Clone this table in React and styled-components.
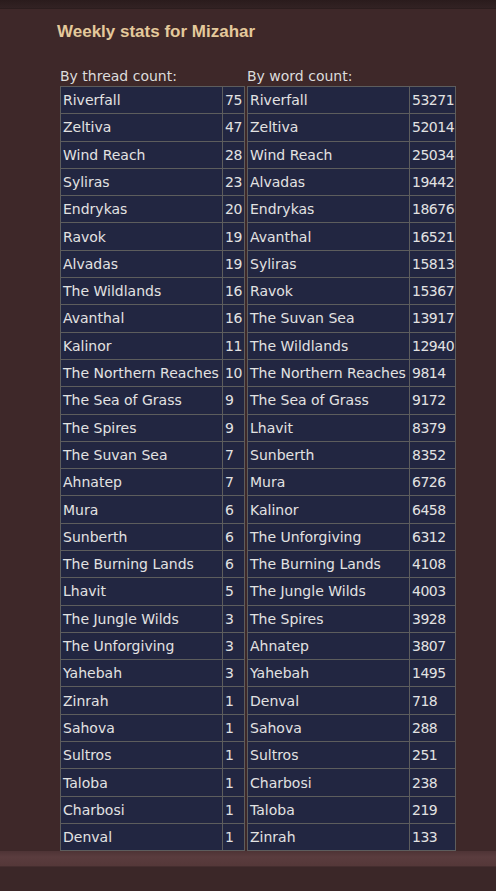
import React from 'react';
import styled, { createGlobalStyle } from 'styled-components';

const GlobalStyle = createGlobalStyle`
  html, body {
    margin: 0;
    padding: 0;
    background: #3e2829;
  }
`;

const Page = styled.div`
  width: 496px;
  height: 891px;
  display: flex;
  flex-direction: column;
  background: #3e2829;
  font-family: "DejaVu Sans", Verdana, sans-serif;
  overflow: hidden;
`;

const TopBar = styled.div`
  height: 8px;
  background: linear-gradient(#2a1b1c, #322223);
  border-bottom: 1px solid #2c1d1e;
`;

const Content = styled.div`
  padding: 13px 0 0 57px;
`;

const Title = styled.h2`
  margin: 0 0 26px;
  font-family: "Liberation Sans", Arial, sans-serif;
  font-size: 17px;
  line-height: 19px;
  font-weight: bold;
  color: #e4c99b;
`;

const Tables = styled.div`
  display: flex;
  gap: 2px;
  padding-left: 3px;
`;

const Column = styled.div`
  display: flex;
  flex-direction: column;
`;

const Caption = styled.div`
  font-size: 14px;
  color: #dcdcdc;
  height: 19px;
  line-height: 18px;
`;

const Table = styled.table`
  border-collapse: collapse;
  background: #222641;
  border: 1px solid #5d5d5d;
`;

const Cell = styled.td`
  border: 1px solid #5d5d5d;
  padding: 0 0 0 2px;
  height: 27.3px;
  box-sizing: border-box;
  font-size: 14px;
  color: #e2e2e2;
  white-space: nowrap;
  width: ${p => p.w}px;
  min-width: ${p => p.w}px;
  max-width: ${p => p.w}px;
  letter-spacing: ${p => (p.num ? '-0.5px' : '0')};
`;

const Band = styled.div`
  margin-top: auto;
  height: 15px;
  background: linear-gradient(#4e3335, #5a3c3e 40%, #553839);
  border-bottom: 1px solid #452e2f;
`;

const Foot = styled.div`
  height: 24px;
  background: #3b2728;
`;

const threads = [
  ['Riverfall', 75], ['Zeltiva', 47], ['Wind Reach', 28], ['Syliras', 23],
  ['Endrykas', 20], ['Ravok', 19], ['Alvadas', 19], ['The Wildlands', 16],
  ['Avanthal', 16], ['Kalinor', 11], ['The Northern Reaches', 10],
  ['The Sea of Grass', 9], ['The Spires', 9], ['The Suvan Sea', 7],
  ['Ahnatep', 7], ['Mura', 6], ['Sunberth', 6], ['The Burning Lands', 6],
  ['Lhavit', 5], ['The Jungle Wilds', 3], ['The Unforgiving', 3],
  ['Yahebah', 3], ['Zinrah', 1], ['Sahova', 1], ['Sultros', 1],
  ['Taloba', 1], ['Charbosi', 1], ['Denval', 1],
];

const words = [
  ['Riverfall', 53271], ['Zeltiva', 52014], ['Wind Reach', 25034],
  ['Alvadas', 19442], ['Endrykas', 18676], ['Avanthal', 16521],
  ['Syliras', 15813], ['Ravok', 15367], ['The Suvan Sea', 13917],
  ['The Wildlands', 12940], ['The Northern Reaches', 9814],
  ['The Sea of Grass', 9172], ['Lhavit', 8379], ['Sunberth', 8352],
  ['Mura', 6726], ['Kalinor', 6458], ['The Unforgiving', 6312],
  ['The Burning Lands', 4108], ['The Jungle Wilds', 4003],
  ['The Spires', 3928], ['Ahnatep', 3807], ['Yahebah', 1495],
  ['Denval', 718], ['Sahova', 288], ['Sultros', 251], ['Charbosi', 238],
  ['Taloba', 219], ['Zinrah', 133],
];

const StatTable = ({ caption, rows, nameW, numW }) => (
  <Column>
    <Caption>{caption}</Caption>
    <Table>
      <tbody>
        {rows.map(([name, n]) => (
          <tr key={name}>
            <Cell w={nameW}>{name}</Cell>
            <Cell w={numW} num>{n}</Cell>
          </tr>
        ))}
      </tbody>
    </Table>
  </Column>
);

export default function App() {
  return (
    <Page>
      <GlobalStyle />
      <TopBar />
      <Content>
        <Title>Weekly stats for Mizahar</Title>
        <Tables>
          <StatTable caption="By thread count:" rows={threads} nameW={162} numW={22} />
          <StatTable caption="By word count:" rows={words} nameW={162} numW={46} />
        </Tables>
      </Content>
      <Band />
      <Foot />
    </Page>
  );
}
